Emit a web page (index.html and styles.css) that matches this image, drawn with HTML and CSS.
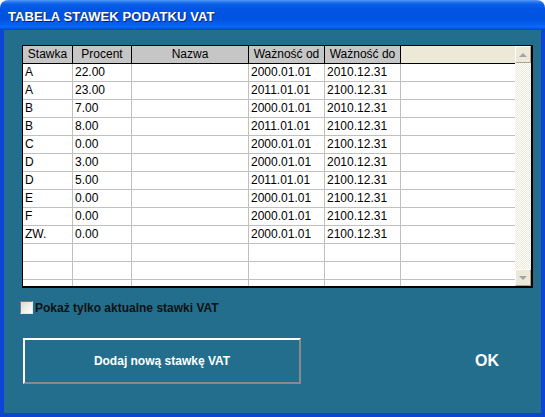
FILE: index.html
```html
<!DOCTYPE html>
<html lang="pl">
<head>
<meta charset="utf-8">
<title>Tabela stawek podatku VAT</title>
<link rel="stylesheet" href="styles.css">
</head>
<body>
<div class="window">
  <div class="titlebar"><span class="title">TABELA STAWEK PODATKU VAT</span></div>
  <div class="client">
    <div class="grid">
      <div class="table">
        <div class="row head">
          <div class="cell">Stawka</div>
          <div class="cell">Procent</div>
          <div class="cell">Nazwa</div>
          <div class="cell">Ważność od</div>
          <div class="cell">Ważność do</div>
          <div class="cell filler"></div>
        </div>
        <div class="row"><div class="cell">A</div><div class="cell">22.00</div><div class="cell"></div><div class="cell">2000.01.01</div><div class="cell">2010.12.31</div><div class="cell filler"></div></div>
        <div class="row"><div class="cell">A</div><div class="cell">23.00</div><div class="cell"></div><div class="cell">2011.01.01</div><div class="cell">2100.12.31</div><div class="cell filler"></div></div>
        <div class="row"><div class="cell">B</div><div class="cell">7.00</div><div class="cell"></div><div class="cell">2000.01.01</div><div class="cell">2010.12.31</div><div class="cell filler"></div></div>
        <div class="row"><div class="cell">B</div><div class="cell">8.00</div><div class="cell"></div><div class="cell">2011.01.01</div><div class="cell">2100.12.31</div><div class="cell filler"></div></div>
        <div class="row"><div class="cell">C</div><div class="cell">0.00</div><div class="cell"></div><div class="cell">2000.01.01</div><div class="cell">2100.12.31</div><div class="cell filler"></div></div>
        <div class="row"><div class="cell">D</div><div class="cell">3.00</div><div class="cell"></div><div class="cell">2000.01.01</div><div class="cell">2010.12.31</div><div class="cell filler"></div></div>
        <div class="row"><div class="cell">D</div><div class="cell">5.00</div><div class="cell"></div><div class="cell">2011.01.01</div><div class="cell">2100.12.31</div><div class="cell filler"></div></div>
        <div class="row"><div class="cell">E</div><div class="cell">0.00</div><div class="cell"></div><div class="cell">2000.01.01</div><div class="cell">2100.12.31</div><div class="cell filler"></div></div>
        <div class="row"><div class="cell">F</div><div class="cell">0.00</div><div class="cell"></div><div class="cell">2000.01.01</div><div class="cell">2100.12.31</div><div class="cell filler"></div></div>
        <div class="row"><div class="cell">ZW.</div><div class="cell">0.00</div><div class="cell"></div><div class="cell">2000.01.01</div><div class="cell">2100.12.31</div><div class="cell filler"></div></div>
        <div class="row"><div class="cell"></div><div class="cell"></div><div class="cell"></div><div class="cell"></div><div class="cell"></div><div class="cell filler"></div></div>
        <div class="row"><div class="cell"></div><div class="cell"></div><div class="cell"></div><div class="cell"></div><div class="cell"></div><div class="cell filler"></div></div>
        <div class="row"><div class="cell"></div><div class="cell"></div><div class="cell"></div><div class="cell"></div><div class="cell"></div><div class="cell filler"></div></div>
      </div>
      <div class="scrollbar">
        <div class="sbtn"><span class="arrow up"></span></div>
        <div class="track"></div>
        <div class="sbtn"><span class="arrow down"></span></div>
      </div>
    </div>
    <label class="check"><span class="box"></span><span class="check-label">Pokaż tylko aktualne stawki VAT</span></label>
    <div class="actions">
      <button class="add" type="button">Dodaj nową stawkę VAT</button>
      <span class="ok">OK</span>
    </div>
  </div>
</div>
</body>
</html>
```

FILE: styles.css
```css
html, body {
  margin: 0;
  padding: 0;
  background: #ffffff;
}

.window {
  width: 545px;
  height: 417px;
  display: flex;
  flex-direction: column;
  font-family: "Liberation Sans", Arial, sans-serif;
}

.titlebar {
  height: 30px;
  flex: none;
  border-radius: 8px 8px 0 0;
  background: linear-gradient(to bottom,
    #5a9cf8 0%, #2a7af2 6%, #0a5fe8 14%, #0055e5 30%,
    #0052e0 60%, #0560f0 82%, #0a6cf8 90%, #0456e6 95%, #0340c8 100%);
  display: flex;
  align-items: center;
  padding-left: 8px;
  padding-top: 2px;
  box-sizing: border-box;
}

.title {
  color: #ffffff;
  font-weight: bold;
  font-size: 13px;
  letter-spacing: 0.1px;
  text-shadow: 1px 1px 0 #0a1f6a;
}

.client {
  flex: 1;
  background: #236e8c;
  border-left: 4px solid #0b45d8;
  border-right: 4px solid #0b45d8;
  border-bottom: 4px solid #0b45d8;
  display: flex;
  flex-direction: column;
  padding: 15px 0 0 18px;
}

.grid {
  display: flex;
  width: 508px;
  height: 240px;
  border-top: 1px solid #000;
  border-left: 1px solid #000;
  border-right: 2px solid #000;
  border-bottom: 2px solid #000;
  background: #ffffff;
}

.table {
  width: 492px;
  height: 240px;
  overflow: hidden;
}

.row {
  display: grid;
  grid-template-columns: 50px 59px 117px 76px 76px 114px;
  height: 18px;
}

.cell {
  box-sizing: border-box;
  height: 18px;
  border-right: 1px solid #c0c0c0;
  border-bottom: 1px solid #c0c0c0;
  font-size: 12px;
  line-height: 17px;
  padding-left: 2px;
  color: #000;
  white-space: nowrap;
  overflow: hidden;
}

.cell.filler {
  border-right: none;
}

.head .cell {
  background: #c6c6c6;
  border-right: 1px solid #000;
  border-bottom: 1px solid #000;
  text-align: center;
  padding-left: 0;
}

.head .cell.filler {
  background: #ece9d8;
  border-right: none;
}

.scrollbar {
  width: 16px;
  display: flex;
  flex-direction: column;
}

.sbtn {
  height: 17px;
  box-sizing: border-box;
  background: #ece9d8;
  border-top: 1px solid #ffffff;
  border-left: 1px solid #ffffff;
  border-right: 1px solid #a8a69a;
  border-bottom: 1px solid #a8a69a;
  display: flex;
  align-items: center;
  justify-content: center;
}

.arrow {
  width: 0;
  height: 0;
  border-left: 4px solid transparent;
  border-right: 4px solid transparent;
}

.arrow.up {
  border-bottom: 4px solid #a3a3a3;
}

.arrow.down {
  border-top: 4px solid #a3a3a3;
}

.track {
  flex: 1;
  background-color: #ffffff;
  background-image: repeating-conic-gradient(#ece9d8 0 25%, #ffffff 0 50%);
  background-size: 2px 2px;
}

.check {
  display: flex;
  align-items: center;
  margin-top: 12px;
  margin-left: -2px;
  height: 15px;
  gap: 2px;
}

.box {
  width: 11px;
  height: 11px;
  background: linear-gradient(135deg, #dcdcd4, #ffffff);
  border: 1px solid;
  border-color: #7a7a7a #e8e8e8 #e8e8e8 #7a7a7a;
}

.check-label {
  font-size: 12px;
  font-weight: bold;
  color: #111111;
}

.actions {
  display: flex;
  align-items: center;
  margin-top: 23px;
}

.add {
  margin-left: 1px;
  width: 278px;
  height: 46px;
  box-sizing: border-box;
  background: #236e8c;
  border: 2px solid;
  border-color: #ffffff #8a8a8a #8a8a8a #ffffff;
  color: #ffffff;
  font-family: "Liberation Sans", Arial, sans-serif;
  font-size: 12px;
  font-weight: bold;
  padding: 0;
}

.ok {
  margin-left: 174px;
  color: #ffffff;
  font-weight: bold;
  font-size: 16px;
}
```
